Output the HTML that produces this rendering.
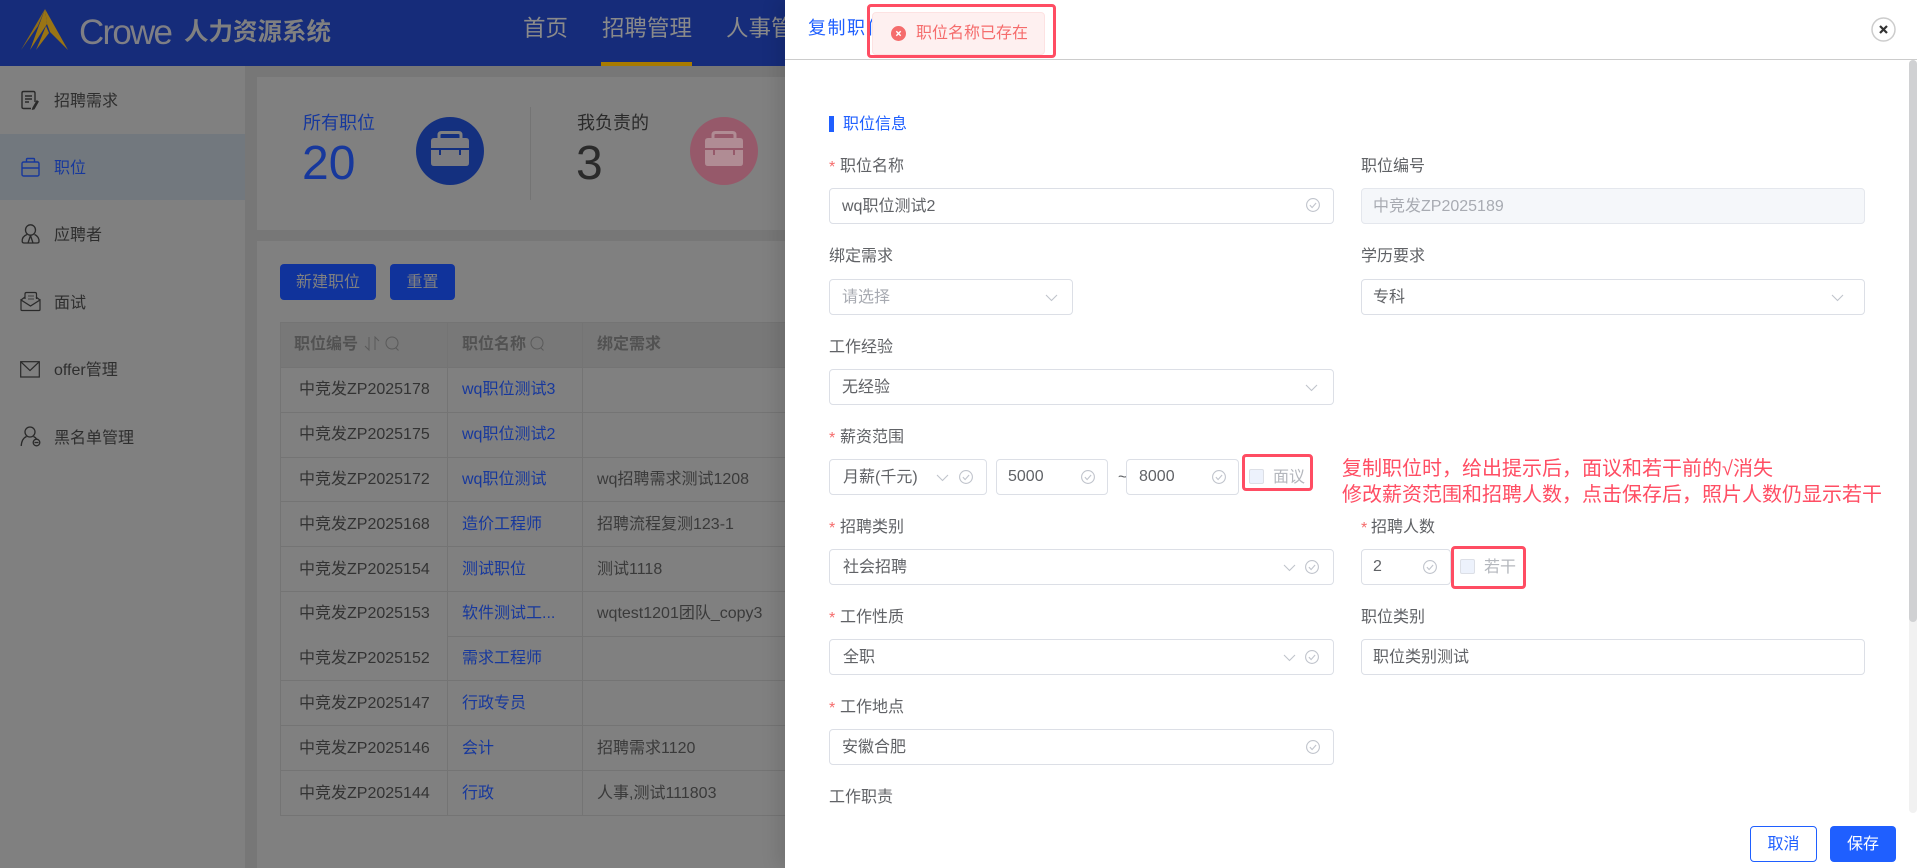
<!DOCTYPE html>
<html lang="zh-CN">
<head>
<meta charset="utf-8">
<title>职位</title>
<style>
html,body{margin:0;padding:0;width:1917px;height:868px;overflow:hidden;background:#777}
*{box-sizing:border-box}
body{font-family:"Liberation Sans","Noto Sans CJK SC",sans-serif;font-size:16px;position:relative}
.t{position:absolute;line-height:24px;height:24px;white-space:nowrap;margin-top:1px}
.b{position:absolute}
.inp{position:absolute;background:#fff;border:1px solid #dcdfe6;border-radius:4px;height:36px}
.lab{color:#606266}
.star{color:#f56c6c}
.val{color:#606266}
.ln{position:absolute;background:#747474}
.c1{color:#333}
.c2{color:#17389c}
.c3{color:#3a3a3a}
svg{position:absolute;display:block}
.red{position:absolute;border:3px solid #ff4d63;border-radius:4px}
.cb{position:absolute;width:15px;height:15px;background:#edf2fc;border:1px solid #dcdfe6;border-radius:2px}
</style>
</head>
<body>
<svg width="0" height="0" style="position:absolute">
<defs>
<g id="chk" fill="none" stroke="#c0c4cc" stroke-width="1.1"><circle cx="7" cy="7" r="6.4"/><path d="M3.9 7.1l2.2 2.5 4-4.6"/></g>
<g id="chv" fill="none" stroke="#c0c4cc" stroke-width="1.1"><path d="M1 1l5.500 5.500L12 1"/></g>
</defs>
</svg>

<!-- background app -->
<div class="b" style="left:0;top:0;width:785px;height:66px;background:#162c7a"></div>
<svg style="left:18px;top:6px" width="56" height="48" viewBox="18 6 56 48">
<path d="M45 9L68 50 50 32 47 24z" fill="#9a7414"/>
<path d="M45 9L47 24 30 50z" fill="#9a7414"/>
<path d="M45 9L38 26 21 50z" fill="#8f6c18"/>
<path d="M46 26L36 50 49 33z" fill="#9a7414"/>
</svg>
<div class="t" style="left:79px;top:11px;line-height:42px;height:42px;font-size:35px;color:#7f7f85;letter-spacing:-1.8px">Crowe</div>
<div class="t" style="left:184px;top:14px;line-height:36px;height:36px;font-size:24.500px;font-weight:700;color:#808080">人力资源系统</div>
<div class="t" style="left:523px;top:12px;line-height:32px;height:32px;font-size:22.500px;color:#8a8a8a">首页</div>
<div class="t" style="left:602px;top:12px;line-height:32px;height:32px;font-size:22.500px;color:#8a8a8a">招聘管理</div>
<div class="t" style="left:726px;top:12px;line-height:32px;height:32px;font-size:22.500px;color:#8a8a8a">人事管理</div>
<div class="b" style="left:601px;top:62px;width:91px;height:4px;background:#a87b00"></div>

<!-- sidebar -->
<div class="b" style="left:0;top:66px;width:245px;height:802px;background:#808080"></div>
<div class="b" style="left:0;top:134px;width:245px;height:66px;background:#72787e"></div>
<svg style="left:20px;top:90px" width="20" height="20" viewBox="0 0 20 20" fill="none" stroke="#2a2a2a" stroke-width="1.400">
<path d="M15 12V3q0-1.500-1.500-1.500H3.500Q2 1.500 2 3v14q0 1.500 1.500 1.500H11"/><path d="M5 6h7M5 9h7M5 12h4"/><path d="M13 18l4-7 1 .7-4 7-1.300.3z"/>
</svg>
<div class="t" style="left:54px;top:89px;color:#2e2e2e">招聘需求</div>
<svg style="left:20px;top:157px" width="20" height="20" viewBox="0 0 20 20" fill="none" stroke="#17389c" stroke-width="1.400">
<rect x="2" y="5" width="17" height="14" rx="1.500"/><path d="M6.500 5V2.500q0-1 1-1h6q1 0 1 1V5M2 11h17"/>
</svg>
<div class="t" style="left:54px;top:156px;color:#17389c">职位</div>
<svg style="left:20px;top:224px" width="20" height="20" viewBox="0 0 20 20" fill="none" stroke="#2a2a2a" stroke-width="1.300">
<ellipse cx="10.500" cy="6" rx="5" ry="5.200"/><path d="M7 10.500C3 12 2 15 2.200 17.500q.1 1.500 2 1.500H17q2 0 2-1.500c.2-2.500-1-5.500-4.500-7M10.500 11.500L8 19M10.500 11.500L13 19"/>
</svg>
<div class="t" style="left:54px;top:223px;color:#2e2e2e">应聘者</div>
<svg style="left:20px;top:291px" width="21" height="21" viewBox="0 0 21 21" fill="none" stroke="#2a2a2a" stroke-width="1.200">
<path d="M5 8V3q0-1.500 1.500-1.500H15q1.500 0 1.500 1.500v5"/><path d="M8 5h6M8 8h6" stroke="#555" stroke-width="1.500"/><path d="M1 9l4-3M20 9l-4-3M1 9v9.500q0 1 1 1h17q1 0 1-1V9l-9.500 6z"/>
</svg>
<div class="t" style="left:54px;top:291px;color:#2e2e2e">面试</div>
<svg style="left:20px;top:361px" width="20" height="17" viewBox="0 0 20 17" fill="none" stroke="#2a2a2a" stroke-width="1.200">
<rect x=".7" y=".7" width="18.600" height="15.300"/><path d="M.7 .7L10 9.500 19.300 .7"/>
</svg>
<div class="t" style="left:54px;top:358px;color:#2e2e2e">offer管理</div>
<svg style="left:20px;top:426px" width="21" height="21" viewBox="0 0 21 21" fill="none" stroke="#2a2a2a" stroke-width="1.300">
<circle cx="10" cy="6" r="5"/><path d="M6.500 10.500C3 12 1.500 15.500 1.200 20M13.500 10.500c1.500.6 2.500 1.500 3.200 2.600"/><circle cx="16.500" cy="16.500" r="3.300"/><path d="M14.500 16.500h4"/>
</svg>
<div class="t" style="left:54px;top:426px;color:#2e2e2e">黑名单管理</div>

<!-- main cards -->
<div class="b" style="left:257px;top:77px;width:528px;height:153px;background:#808080"></div>
<div class="b" style="left:257px;top:241px;width:528px;height:627px;background:#808080"></div>

<div class="t" style="left:303px;top:110px;font-size:18px;color:#17389c">所有职位</div>
<div class="t" style="left:302px;top:135px;height:56px;line-height:56px;font-size:48px;color:#17389c">20</div>
<svg style="left:416px;top:117px" width="68" height="68" viewBox="0 0 68 68">
<circle cx="34" cy="34" r="34" fill="#14307f"/>
<path d="M23 22v-4q0-2.500 2.500-2.500h17q2.500 0 2.500 2.500v4" fill="none" stroke="#808080" stroke-width="3"/>
<path d="M15 24q0-3 3-3h32q3 0 3 3v7H15zM15 33h8v5h2v-5h18v5h2v-5h8v13q0 3-3 3H18q-3 0-3-3z" fill="#7c7c80"/>
</svg>
<div class="b" style="left:530px;top:107px;width:1px;height:93px;background:#747474"></div>
<div class="t" style="left:577px;top:110px;font-size:18px;color:#2a2a2a">我负责的</div>
<div class="t" style="left:576px;top:135px;height:56px;line-height:56px;font-size:48px;color:#2a2a2a">3</div>
<svg style="left:690px;top:117px" width="68" height="68" viewBox="0 0 68 68">
<circle cx="34" cy="34" r="34" fill="#96596a"/>
<path d="M23 22v-4q0-2.500 2.500-2.500h17q2.500 0 2.500 2.500v4" fill="none" stroke="#b08c94" stroke-width="3"/>
<path d="M15 24q0-3 3-3h32q3 0 3 3v7H15zM15 33h8v5h2v-5h18v5h2v-5h8v13q0 3-3 3H18q-3 0-3-3z" fill="#b08c94"/>
</svg>

<div class="b" style="left:280px;top:264px;width:96px;height:36px;background:#10339b;border-radius:4px;color:#808080;text-align:center;line-height:38px">新建职位</div>
<div class="b" style="left:390px;top:264px;width:65px;height:36px;background:#10339b;border-radius:4px;color:#808080;text-align:center;line-height:38px">重置</div>

<!-- table -->
<div class="b" style="left:280px;top:322px;width:505px;height:45px;background:#787878"></div>
<div class="ln" style="left:280px;top:322px;width:505px;height:1px"></div>
<div class="ln" style="left:280px;top:322px;width:1px;height:493px"></div>
<div class="ln" style="left:447px;top:322px;width:1px;height:493px"></div>
<div class="ln" style="left:582px;top:322px;width:1px;height:493px"></div>
<div class="ln" style="left:280px;top:367px;width:505px;height:1px"></div>
<div class="ln" style="left:280px;top:412px;width:505px;height:1px"></div>
<div class="ln" style="left:280px;top:457px;width:505px;height:1px"></div>
<div class="ln" style="left:280px;top:501px;width:505px;height:1px"></div>
<div class="ln" style="left:280px;top:546px;width:505px;height:1px"></div>
<div class="ln" style="left:280px;top:591px;width:505px;height:1px"></div>
<div class="ln" style="left:447px;top:636px;width:338px;height:1px"></div>
<div class="ln" style="left:280px;top:680px;width:505px;height:1px"></div>
<div class="ln" style="left:280px;top:725px;width:505px;height:1px"></div>
<div class="ln" style="left:280px;top:770px;width:505px;height:1px"></div>
<div class="ln" style="left:280px;top:815px;width:505px;height:1px"></div>

<div class="t" style="left:294px;top:332px;font-weight:700;color:#525252">职位编号</div>
<svg style="left:364px;top:336px" width="37" height="16" viewBox="0 0 37 16" fill="none" stroke="#5a5a5a" stroke-width="1">
<path d="M5 1v13L1 10M11 14V1l4 4"/><circle cx="28" cy="7" r="6"/><path d="M32 12l2.500 2.500"/>
</svg>
<div class="t" style="left:462px;top:332px;font-weight:700;color:#525252">职位名称</div>
<svg style="left:530px;top:336px" width="15" height="16" viewBox="0 0 15 16" fill="none" stroke="#5a5a5a" stroke-width="1">
<circle cx="7" cy="7" r="6"/><path d="M11 12l2.500 2.500"/>
</svg>
<div class="t" style="left:597px;top:332px;font-weight:700;color:#525252">绑定需求</div>

<div class="t c1" style="left:299px;top:377px">中竞发ZP2025178</div>
<div class="t c2" style="left:462px;top:377px">wq职位测试3</div>

<div class="t c1" style="left:299px;top:422px">中竞发ZP2025175</div>
<div class="t c2" style="left:462px;top:422px">wq职位测试2</div>

<div class="t c1" style="left:299px;top:467px">中竞发ZP2025172</div>
<div class="t c2" style="left:462px;top:467px">wq职位测试</div>
<div class="t c3" style="left:597px;top:467px">wq招聘需求测试1208</div>

<div class="t c1" style="left:299px;top:512px">中竞发ZP2025168</div>
<div class="t c2" style="left:462px;top:512px">造价工程师</div>
<div class="t c3" style="left:597px;top:512px">招聘流程复测123-1</div>

<div class="t c1" style="left:299px;top:557px">中竞发ZP2025154</div>
<div class="t c2" style="left:462px;top:557px">测试职位</div>
<div class="t c3" style="left:597px;top:557px">测试1118</div>

<div class="t c1" style="left:299px;top:601px">中竞发ZP2025153</div>
<div class="t c2" style="left:462px;top:601px">软件测试工...</div>
<div class="t c3" style="left:597px;top:601px">wqtest1201团队_copy3</div>

<div class="t c1" style="left:299px;top:646px">中竞发ZP2025152</div>
<div class="t c2" style="left:462px;top:646px">需求工程师</div>

<div class="t c1" style="left:299px;top:691px">中竞发ZP2025147</div>
<div class="t c2" style="left:462px;top:691px">行政专员</div>

<div class="t c1" style="left:299px;top:736px">中竞发ZP2025146</div>
<div class="t c2" style="left:462px;top:736px">会计</div>
<div class="t c3" style="left:597px;top:736px">招聘需求1120</div>

<div class="t c1" style="left:299px;top:781px">中竞发ZP2025144</div>
<div class="t c2" style="left:462px;top:781px">行政</div>
<div class="t c3" style="left:597px;top:781px">人事,测试111803</div>

<!-- panel -->
<div class="b" style="left:785px;top:0;width:1132px;height:868px;background:#fff;box-shadow:-8px 0 16px rgba(0,0,0,.1)"></div>
<div class="b" style="left:785px;top:59px;width:1132px;height:1px;background:#ccc"></div>
<div class="t" style="left:808px;top:15px;font-size:18px;color:#1f5fff;letter-spacing:1.500px">复制职位</div>

<svg style="left:1871px;top:17px" width="25" height="25" viewBox="0 0 25 25">
<circle cx="12.500" cy="12.500" r="11.500" fill="#fff" stroke="#ccc" stroke-width="1.500"/>
<path d="M9 9l7 7M16 9l-7 7" stroke="#333" stroke-width="2.200" fill="none"/>
</svg>

<!-- scrollbar -->
<div class="b" style="left:1909px;top:60px;width:8px;height:753px;background:#f1f1f1;border-radius:4px"></div>
<div class="b" style="left:1909px;top:60px;width:8px;height:562px;background:#d0d1d3;border-radius:4px"></div>

<!-- section -->
<div class="b" style="left:829px;top:116px;width:5px;height:16px;background:#1f5fff"></div>
<div class="t" style="left:843px;top:112px;color:#1f5fff">职位信息</div>

<!-- row 1 -->
<div class="t star" style="left:829px;top:155px">*</div>
<div class="t lab" style="left:840px;top:154px">职位名称</div>
<div class="inp" style="left:829px;top:188px;width:505px"></div>
<div class="t val" style="left:842px;top:194px">wq职位测试2</div>
<svg style="left:1306px;top:198px" width="14" height="14"><use href="#chk"/></svg>

<div class="t lab" style="left:1361px;top:154px">职位编号</div>
<div class="inp" style="left:1361px;top:188px;width:504px;background:#f5f7fa;border-color:#e4e7ed"></div>
<div class="t" style="left:1373px;top:194px;color:#a8abb2">中竞发ZP2025189</div>

<!-- row 2 -->
<div class="t lab" style="left:829px;top:244px">绑定需求</div>
<div class="inp" style="left:829px;top:279px;width:244px"></div>
<div class="t" style="left:842px;top:285px;color:#a8abb2">请选择</div>
<svg style="left:1045px;top:294px" width="13" height="8"><use href="#chv"/></svg>

<div class="t lab" style="left:1361px;top:244px">学历要求</div>
<div class="inp" style="left:1361px;top:279px;width:504px"></div>
<div class="t val" style="left:1373px;top:285px">专科</div>
<svg style="left:1831px;top:294px" width="13" height="8"><use href="#chv"/></svg>

<!-- row 3 -->
<div class="t lab" style="left:829px;top:335px">工作经验</div>
<div class="inp" style="left:829px;top:369px;width:505px"></div>
<div class="t val" style="left:842px;top:375px">无经验</div>
<svg style="left:1305px;top:384px" width="13" height="8"><use href="#chv"/></svg>

<!-- row 4 -->
<div class="t star" style="left:829px;top:426px">*</div>
<div class="t lab" style="left:840px;top:425px">薪资范围</div>
<div class="inp" style="left:829px;top:459px;width:158px"></div>
<div class="t val" style="left:843px;top:465px">月薪(千元)</div>
<svg style="left:936px;top:474px" width="13" height="8"><use href="#chv"/></svg>
<svg style="left:959px;top:470px" width="14" height="14"><use href="#chk"/></svg>
<div class="inp" style="left:996px;top:459px;width:112px"></div>
<div class="t val" style="left:1008px;top:464px">5000</div>
<svg style="left:1081px;top:470px" width="14" height="14"><use href="#chk"/></svg>
<div class="t" style="left:1118px;top:465px;color:#606266">~</div>
<div class="inp" style="left:1126px;top:459px;width:113px"></div>
<div class="t val" style="left:1139px;top:464px">8000</div>
<svg style="left:1212px;top:470px" width="14" height="14"><use href="#chk"/></svg>
<div class="red" style="left:1242px;top:454px;width:71px;height:37px"></div>
<div class="cb" style="left:1249px;top:469px"></div>
<div class="t" style="left:1273px;top:465px;color:#b4b7bd">面议</div>

<!-- annotation -->
<div class="t" style="left:1342px;top:456px;font-size:20px;color:#ff4d63">复制职位时，给出提示后，面议和若干前的√消失</div>
<div class="t" style="left:1342px;top:482px;font-size:20px;color:#ff4d63">修改薪资范围和招聘人数，点击保存后，照片人数仍显示若干</div>

<!-- row 5 -->
<div class="t star" style="left:829px;top:516px">*</div>
<div class="t lab" style="left:840px;top:515px">招聘类别</div>
<div class="inp" style="left:829px;top:549px;width:505px"></div>
<div class="t val" style="left:843px;top:555px">社会招聘</div>
<svg style="left:1283px;top:564px" width="13" height="8"><use href="#chv"/></svg>
<svg style="left:1305px;top:560px" width="14" height="14"><use href="#chk"/></svg>

<div class="t star" style="left:1361px;top:516px">*</div>
<div class="t lab" style="left:1371px;top:515px">招聘人数</div>
<div class="inp" style="left:1361px;top:549px;width:90px"></div>
<div class="t val" style="left:1373px;top:554px">2</div>
<svg style="left:1423px;top:560px" width="14" height="14"><use href="#chk"/></svg>
<div class="red" style="left:1451px;top:546px;width:75px;height:43px"></div>
<div class="cb" style="left:1460px;top:559px"></div>
<div class="t" style="left:1484px;top:555px;color:#b4b7bd">若干</div>

<!-- row 6 -->
<div class="t star" style="left:829px;top:606px">*</div>
<div class="t lab" style="left:840px;top:605px">工作性质</div>
<div class="inp" style="left:829px;top:639px;width:505px"></div>
<div class="t val" style="left:843px;top:645px">全职</div>
<svg style="left:1283px;top:654px" width="13" height="8"><use href="#chv"/></svg>
<svg style="left:1305px;top:650px" width="14" height="14"><use href="#chk"/></svg>

<div class="t lab" style="left:1361px;top:605px">职位类别</div>
<div class="inp" style="left:1361px;top:639px;width:504px"></div>
<div class="t val" style="left:1373px;top:645px">职位类别测试</div>

<!-- row 7 -->
<div class="t star" style="left:829px;top:696px">*</div>
<div class="t lab" style="left:840px;top:695px">工作地点</div>
<div class="inp" style="left:829px;top:729px;width:505px"></div>
<div class="t val" style="left:842px;top:735px">安徽合肥</div>
<svg style="left:1306px;top:740px" width="14" height="14"><use href="#chk"/></svg>

<!-- row 8 -->
<div class="t lab" style="left:829px;top:785px">工作职责</div>

<!-- footer -->
<div class="b" style="left:785px;top:813px;width:1124px;height:55px;background:#fff"></div>
<div class="b" style="left:1750px;top:826px;width:67px;height:36px;border:1px solid #1f5fff;border-radius:4px;background:#fff;color:#1f5fff;text-align:center;line-height:36px">取消</div>
<div class="b" style="left:1830px;top:826px;width:66px;height:36px;background:#1f5fff;border-radius:4px;color:#fff;text-align:center;line-height:38px">保存</div>

<!-- toast -->
<div class="b" style="left:872px;top:12px;width:173px;height:43px;background:#fef0f0;border:1px solid #fde2e2;border-radius:4px"></div>
<svg style="left:891px;top:26px" width="15" height="15" viewBox="0 0 15 15">
<circle cx="7.500" cy="7.500" r="7.500" fill="#f56c6c"/><path d="M5.300 5.300l4.400 4.400M9.700 5.300l-4.400 4.400" stroke="#fff" stroke-width="1.400" fill="none"/>
</svg>
<div class="t" style="left:916px;top:21px;color:#f56c6c">职位名称已存在</div>
<div class="red" style="left:867px;top:4px;width:189px;height:54px"></div>
</body>
</html>
